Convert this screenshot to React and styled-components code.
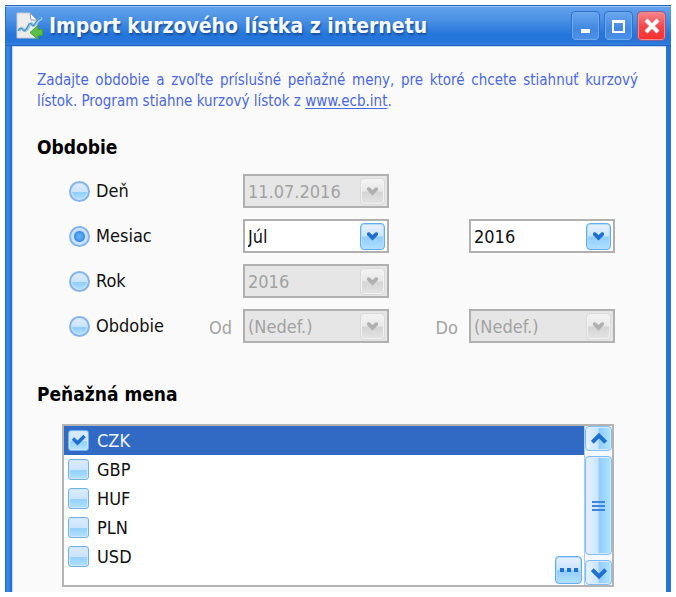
import React, { useState } from "react";
import styled, { createGlobalStyle, css } from "styled-components";

const Global = createGlobalStyle`
  *, *::before, *::after { box-sizing: border-box; }
  body { margin: 0; background: #fff; }
  body, button, select, input { font-family: "DejaVu Sans Condensed", "DejaVu Sans", sans-serif; }
`;

const Page = styled.div`
  padding: 5px;
  height: 100vh;
  overflow: hidden;
`;

const Window = styled.main`
  display: flex;
  flex-direction: column;
  height: 100%;
  background: linear-gradient(90deg, #2a6fc4 0, #3f8ae6 3px, #1f6fd6 6px, #2474da 100%);
`;

const TitleBar = styled.header`
  display: flex;
  align-items: center;
  gap: 6px;
  height: 41px;
  padding: 0 6px 0 10px;
  border-top: 1px solid #2b66b4;
  box-shadow: inset 0 1px 0 #9cc4f4, inset 1px 0 0 #2a6fc4, inset 0 -1px 0 #1c63c4;
  background: linear-gradient(#64a3ee, #4a90e4 35%, #2677dc 70%, #2474da 88%, #3b82de);
`;

const Title = styled.h1`
  flex: 1;
  margin: 0;
  font-size: 21px;
  line-height: 26px;
  color: #f6faff;
  text-shadow: 1px 2px 2px #174f9c;
  white-space: nowrap;
`;

const Controls = styled.div`
  display: flex;
  gap: 6px;
`;

const ControlButton = styled.button`
  display: grid;
  place-items: center;
  width: 27px;
  height: 28px;
  padding: 0;
  border: 1px solid ${(p) => (p.$danger ? "#f48a8c" : "#6fa9ef")};
  border-radius: 3px;
  outline: 1px solid ${(p) => (p.$danger ? "#8a5c90" : "#2f70c8")};
  background: ${(p) =>
    p.$danger ? "linear-gradient(#f58286, #f2454a 55%, #f6312f)" : "linear-gradient(#68a5ee, #4288e2 60%, #4a90e8)"};
`;

const Content = styled.section`
  flex: 1;
  margin: 0 5px 0 7px;
  padding: 24px 28px 0 25px;
  background: #fafafa;
  box-shadow: inset 1px 1px 0 #c4d8f2;
`;

const Intro = styled.p`
  margin: 0 0 23px;
  font-size: 15px;
  line-height: 21px;
  color: #4a68e0;
  text-align: justify;
`;

const Link = styled.a`
  color: inherit;
  text-underline-offset: 2px;
`;

const Heading = styled.h2`
  margin: 0;
  font-size: 19px;
  line-height: 24px;
  color: #000;
`;

const Fields = styled.div`
  display: grid;
  grid-template-columns: 136px 38px 146px 1fr 146px;
  grid-auto-rows: 34px;
  gap: 11px 0;
  align-items: center;
  margin: 15px 0 39px;
  padding: 0 23px 0 32px;
`;

const OptionLabel = styled.label`
  display: flex;
  align-items: center;
  gap: 6px;
  font-size: 18px;
  line-height: 24px;
  color: #111;
`;

const PeriodLabel = styled(OptionLabel)`
  grid-column: 1;
`;

const Radio = styled.input`
  appearance: none;
  width: 21px;
  height: 21px;
  margin: 0;
  border: 2px solid #84b4ee;
  border-radius: 50%;
  background: linear-gradient(#dcecfc, #cbe4fc 50%, #8fcdfd 56%, #b4e2fe);
  box-shadow: inset 0 0 0 1px #d4e8fc;
  &:checked {
    background: radial-gradient(circle, #5cacf2 0 2px, #3a8ce4 5px, #c4e0fb 6px);
  }
`;

const SideLabel = styled.label`
  padding: 4px 11px 0 0;
  text-align: right;
  font-size: 18px;
  line-height: 24px;
  color: #a4a4a4;
`;

const SelectFrame = styled.div`
  display: grid;
  grid-column: ${(p) => p.$column};
  height: 34px;
  & > * { grid-area: 1 / 1; }
`;

const Select = styled.select`
  appearance: none;
  width: 100%;
  height: 100%;
  margin: 0;
  padding: 0 30px 0 3px;
  border: 2px solid #b0b0b0;
  border-radius: 0;
  background: #fff;
  font-size: 18px;
  color: #111;
  opacity: 1;
  &:disabled { background: #e6e6e6; color: #a2a2a2; }
`;

const glossy = css`
  border: 1px solid #62aef4;
  border-radius: 4px;
  background: linear-gradient(#e6f2fe, #cbe4fc 48%, #90cdfd 52%, #b0e0ff);
  box-shadow: inset 0 0 0 1px #b4dafd;
`;

const Arrow = styled.span`
  display: grid;
  place-items: center;
  align-self: center;
  justify-self: end;
  width: 25px;
  height: 27px;
  margin-right: 4px;
  pointer-events: none;
  color: #1f6fd0;
  ${glossy}
  ${(p) =>
    p.$disabled &&
    css`
      color: #b0b0b0;
      border-color: #dadada;
      background: linear-gradient(#f4f4f4, #e8e8e8 48%, #d4d4d4 52%, #e4e4e4);
      box-shadow: inset 0 0 0 1px #f2f2f2;
    `}
`;

const ListBox = styled.div`
  position: relative;
  display: flex;
  height: 163px;
  margin: 18px 24px 0 25px;
  border: 2px solid #b4b4b4;
  background: #fff;
`;

const Rows = styled.ul`
  flex: 1;
  margin: 0;
  padding: 0;
  list-style: none;
`;

const Row = styled.li`
  display: flex;
  height: 29px;
  padding-left: 4px;
  background: ${(p) => (p.$selected ? "#316ac5" : "#fff")};
  & > label { flex: 1; gap: 8px; color: ${(p) => (p.$selected ? "#f2f6ff" : "#111")}; }
`;

const Check = styled.input`
  appearance: none;
  display: grid;
  place-items: center;
  width: 21px;
  height: 21px;
  margin: 0;
  border: 1px solid #6fb2ee;
  border-radius: 3px;
  background: linear-gradient(#dcecfc, #cbe4fc 50%, #94d0fd 56%, #b4e2fe);
  box-shadow: inset 0 0 0 1px #cfe6fc;
`;

const CheckBoxFrame = styled.span`
  display: grid;
  & > * { grid-area: 1 / 1; place-self: center; }
  & > svg { pointer-events: none; }
`;

const ScrollBar = styled.div`
  display: flex;
  flex-direction: column;
  gap: 5px;
  width: 28px;
  border-left: 1px solid #a8cdf8;
  background: #f4f9ff;
`;

const ScrollPart = styled.button`
  display: grid;
  place-items: center;
  flex: ${(p) => (p.$thumb ? "1" : "0 0 25px")};
  padding: 0;
  border: 1px solid #7fbcf8;
  border-radius: 4px;
  background: linear-gradient(90deg, #e6f2fe, #cbe4fc 48%, #90cdfd 52%, #b0e4ff);
  box-shadow: inset 0 0 0 1px #d8ecfe;
  color: #1f6fd0;
`;

const MoreButton = styled.button`
  position: absolute;
  right: 30px;
  bottom: 1px;
  display: grid;
  place-items: center;
  width: 27px;
  height: 28px;
  padding: 0;
  ${glossy}
`;

function TitleIcon() {
  return (
    <svg width="28" height="28" viewBox="0 0 28 28" aria-hidden="true">
      <path d="M2 1h13l7 7v18H2z" fill="#ebeceb" stroke="#c6cacc" />
      <path d="M15 1l1 7h6z" fill="#fafafa" stroke="#9ba2a8" />
      <path
        d="M4 19c2-4 4-3 5-1s4-1 5-4 3-3 4-1 3-1 4-3 3-3 5-4"
        fill="none"
        stroke="#9fd0e4"
        strokeWidth="3"
      />
      <path
        d="M3 19c2-4 4-3 5-1s4-1 5-4 3-3 4-1 3-1 4-3 3-3 5-4"
        fill="none"
        stroke="#4f94c2"
        strokeWidth="1.5"
      />
      <path d="M15 20.500l8-7v4h4.500v6H23v4z" fill="#5cc046" stroke="#46a038" />
    </svg>
  );
}

function Chevron({ up = false, size = 12 }) {
  return (
    <svg width={size} height={size} viewBox="0 0 12 12" aria-hidden="true">
      <path d={up ? "M1 8.500l5-5 5 5" : "M1 3.500l5 5 5-5"} fill="none" stroke="currentColor" strokeWidth="3" />
    </svg>
  );
}

function SmallChevron() {
  return (
    <svg width="13" height="10" viewBox="0 0 13 10" aria-hidden="true">
      <path d="M1 4V2l2-1 3.500 3L10 1l2 1v2L6.500 9.500z" fill="currentColor" />
    </svg>
  );
}

function DropDown({ id, label, column, disabled, options }) {
  return (
    <SelectFrame $column={column}>
      <Select id={id} aria-label={label} disabled={disabled}>
        {options.map((o) => (
          <option key={o}>{o}</option>
        ))}
      </Select>
      <Arrow $disabled={disabled}>
        <SmallChevron />
      </Arrow>
    </SelectFrame>
  );
}

function Option({ value, mode, onPick, children }) {
  return (
    <PeriodLabel>
      <Radio type="radio" name="period" checked={mode === value} onChange={() => onPick(value)} />
      {children}
    </PeriodLabel>
  );
}

const currencies = ["CZK", "GBP", "HUF", "PLN", "USD"];

export default function App() {
  const [mode, setMode] = useState("month");
  const [picked, setPicked] = useState(["CZK"]);
  const toggle = (c) => setPicked((p) => (p.includes(c) ? p.filter((x) => x !== c) : [...p, c]));
  const radio = { mode, onPick: setMode };

  return (
    <Page>
      <Global />
      <Window>
        <TitleBar>
          <TitleIcon />
          <Title>Import kurzového lístka z internetu</Title>
          <Controls>
            <ControlButton aria-label="Minimalizovať">
              <svg width="19" height="20" viewBox="0 0 19 20"><path d="M5 13h9v4H5z" fill="#fff" /></svg>
            </ControlButton>
            <ControlButton aria-label="Maximalizovať">
              <svg width="13" height="13" viewBox="0 0 13 13"><path d="M1 1h11v11H1z" fill="none" stroke="#fff" strokeWidth="2" /><path d="M0 0h13v3H0z" fill="#fff" /></svg>
            </ControlButton>
            <ControlButton $danger aria-label="Zavrieť">
              <svg width="18" height="18" viewBox="0 0 18 18"><path d="M3 3l12 12M15 3L3 15" stroke="#fff" strokeWidth="4" /></svg>
            </ControlButton>
          </Controls>
        </TitleBar>
        <Content>
          <Intro>
            Zadajte obdobie a zvoľte príslušné peňažné meny, pre ktoré chcete stiahnuť kurzový lístok. Program stiahne
            kurzový lístok z <Link href="#ecb">www.ecb.int</Link>.
          </Intro>
          <Heading>Obdobie</Heading>
          <Fields>
            <Option value="day" {...radio}>Deň</Option>
            <DropDown column={3} label="Deň" disabled={mode !== "day"} options={["11.07.2016"]} />
            <Option value="month" {...radio}>Mesiac</Option>
            <DropDown column={3} label="Mesiac" disabled={mode !== "month"} options={["Júl", "August"]} />
            <DropDown column={5} label="Rok mesiaca" disabled={mode !== "month"} options={["2016", "2015"]} />
            <Option value="year" {...radio}>Rok</Option>
            <DropDown column={3} label="Rok" disabled={mode !== "year"} options={["2016", "2015"]} />
            <Option value="range" {...radio}>Obdobie</Option>
            <SideLabel htmlFor="from">Od</SideLabel>
            <DropDown column={3} id="from" disabled={mode !== "range"} options={["(Nedef.)"]} />
            <SideLabel htmlFor="to">Do</SideLabel>
            <DropDown column={5} id="to" disabled={mode !== "range"} options={["(Nedef.)"]} />
          </Fields>
          <Heading>Peňažná mena</Heading>
          <ListBox>
            <Rows>
              {currencies.map((c, i) => (
                <Row key={c} $selected={i === 0}>
                  <OptionLabel>
                    <CheckBoxFrame>
                      <Check type="checkbox" checked={picked.includes(c)} onChange={() => toggle(c)} />
                      {picked.includes(c) && (
                        <svg width="15" height="15" viewBox="0 0 15 15"><path d="M2 5.500l4.500 4.500 7-7" fill="none" stroke="#1f6fd0" strokeWidth="3.500" /></svg>
                      )}
                    </CheckBoxFrame>
                    {c}
                  </OptionLabel>
                </Row>
              ))}
            </Rows>
            <ScrollBar>
              <ScrollPart aria-label="Nahor"><Chevron up size={16} /></ScrollPart>
              <ScrollPart $thumb aria-label="Posuvník">
                <svg width="13" height="10" viewBox="0 0 13 10"><path d="M0 1h13M0 5h13M0 9h13" stroke="#3b86dc" strokeWidth="2" /></svg>
              </ScrollPart>
              <ScrollPart aria-label="Nadol"><Chevron size={16} /></ScrollPart>
            </ScrollBar>
            <MoreButton aria-label="Viac">
              <svg width="18" height="4" viewBox="0 0 18 4"><path d="M0 0h4v4H0zM7 0h4v4H7zM14 0h4v4h-4z" fill="#1f6fd0" /></svg>
            </MoreButton>
          </ListBox>
        </Content>
      </Window>
    </Page>
  );
}
